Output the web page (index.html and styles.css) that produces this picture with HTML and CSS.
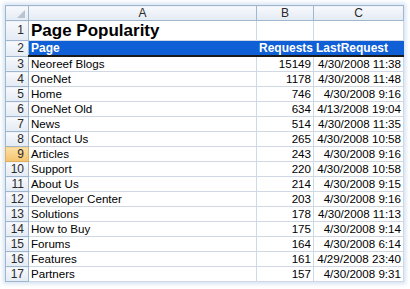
FILE: index.html
```html
<!DOCTYPE html>
<html>
<head>
<meta charset="utf-8">
<link rel="stylesheet" href="styles.css">
</head>
<body>
<div class="frame">
<table class="sheet">
<colgroup><col class="c0"><col class="ca"><col class="cb"><col class="cc"></colgroup>
<tr class="hdr"><th class="corner"><span class="tri"></span></th><th>A</th><th>B</th><th class="last">C</th></tr>
<tr class="r1"><th>1</th><td class="title">Page Popularity</td><td></td><td></td></tr>
<tr class="r2"><th>2</th><td class="bh">Page</td><td class="bh num">Requests</td><td class="bh">LastRequest</td></tr>
<tr><th>3</th><td>Neoreef Blogs</td><td class="num">15149</td><td class="num">4/30/2008 11:38</td></tr>
<tr><th>4</th><td>OneNet</td><td class="num">1178</td><td class="num">4/30/2008 11:48</td></tr>
<tr><th>5</th><td>Home</td><td class="num">746</td><td class="num">4/30/2008 9:16</td></tr>
<tr><th>6</th><td>OneNet Old</td><td class="num">634</td><td class="num">4/13/2008 19:04</td></tr>
<tr><th>7</th><td>News</td><td class="num">514</td><td class="num">4/30/2008 11:35</td></tr>
<tr><th>8</th><td>Contact Us</td><td class="num">265</td><td class="num">4/30/2008 10:58</td></tr>
<tr><th class="sel">9</th><td>Articles</td><td class="num">243</td><td class="num">4/30/2008 9:16</td></tr>
<tr><th>10</th><td>Support</td><td class="num">220</td><td class="num">4/30/2008 10:58</td></tr>
<tr><th>11</th><td>About Us</td><td class="num">214</td><td class="num">4/30/2008 9:15</td></tr>
<tr><th>12</th><td>Developer Center</td><td class="num">203</td><td class="num">4/30/2008 9:16</td></tr>
<tr><th>13</th><td>Solutions</td><td class="num">178</td><td class="num">4/30/2008 11:13</td></tr>
<tr><th>14</th><td>How to Buy</td><td class="num">175</td><td class="num">4/30/2008 9:14</td></tr>
<tr><th>15</th><td>Forums</td><td class="num">164</td><td class="num">4/30/2008 6:14</td></tr>
<tr><th>16</th><td>Features</td><td class="num">161</td><td class="num">4/29/2008 23:40</td></tr>
<tr><th>17</th><td>Partners</td><td class="num">157</td><td class="num">4/30/2008 9:31</td></tr>
</table>
</div>
</body>
</html>
```
FILE: styles.css
```css
html, body { margin: 0; padding: 0; background: #fff; }
.frame {
  width: 410px; height: 289px; box-sizing: border-box;
  padding: 5px 7px 8px 5px;
  background: #fff;
}
.sheet {
  border-collapse: collapse;
  table-layout: fixed;
  width: 398px;
  font-family: "Liberation Sans", Arial, sans-serif;
  font-size: 11.6px;
  color: #000;
  box-shadow: 0 0 4px 2px #d6e4f3;
}
.c0 { width: 23px; }
.ca { width: 228px; }
.cb { width: 57px; }
.cc { width: 90px; }
.sheet th, .sheet td {
  border: 1px solid #d0d7e5;
  padding: 0 2px;
  height: 14px;
  line-height: 14px;
  white-space: nowrap;
  overflow: hidden;
}
.sheet th {
  font-weight: normal;
  background: linear-gradient(#f7f9fc, #e4ebf4);
  border-color: #9eb6ce;
  color: #2a2a2a;
  text-align: center;
  font-size: 12px;
  padding: 0;
}
.sheet tr > th:first-child { text-align: right; padding-right: 4px; }
.hdr th { height: 14px; }
.hdr th.corner { text-align: center; position: relative; }
.tri {
  position: absolute; right: 3px; bottom: 2px;
  width: 0; height: 0;
  border-left: 8px solid transparent;
  border-bottom: 8px solid #b8c4d2;
}
.sel { background: linear-gradient(#fbe0a6, #f5c46d) !important; border-color: #e0b060 !important; }
.r1 th, .r1 td { height: 19px; line-height: 19px; }
.title { font-size: 17px; font-weight: bold; padding-left: 3px; }
.bh {
  background: #0f5fd6;
  color: #fff;
  font-weight: bold;
  font-size: 12px;
  border-color: #0f5fd6 !important;
}
.r2 td { border-bottom: 2px solid #1a1a1a !important; }
.num { text-align: right; }
```
